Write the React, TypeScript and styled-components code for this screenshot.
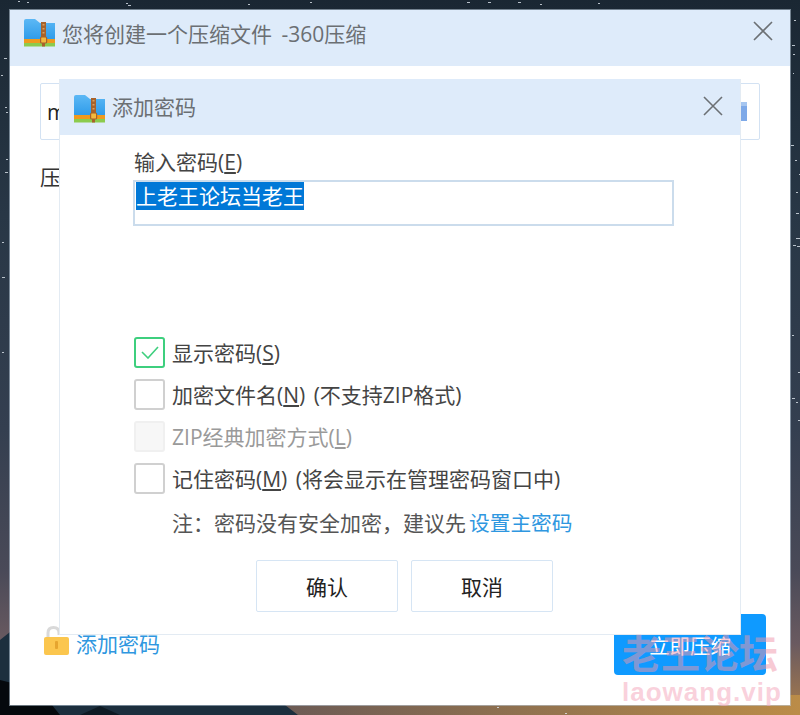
import React from "react";
import styled, { createGlobalStyle } from "styled-components";

const Global = createGlobalStyle`
  html, body { margin: 0; padding: 0; background: #1b2a38; }
  body { font-family: "Open Sans", "Noto Sans CJK SC", sans-serif; }
  * { box-sizing: border-box; }
`;

const Desktop = styled.div`
  position: relative;
  width: 800px;
  height: 715px;
  padding: 10px;
  overflow: hidden;
`;
const WallpaperSvg = styled.svg`
  position: absolute;
  inset: 0;
`;
const Win = styled.div`
  position: relative;
  width: 780px;
  height: 695px;
  background: #fff;
  display: flex;
  flex-direction: column;
  box-shadow: 0 0 0 1px rgba(190, 205, 220, 0.55);
`;
const TitleBar = styled.div<{ $inner?: boolean }>`
  flex: none;
  height: 56px;
  background: #deebfa;
  display: flex;
  align-items: center;
  padding: ${(p) => (p.$inner ? "3px 17px 0 14px" : "0 17px 11px 14px")};
  gap: 7px;
`;
const TitleText = styled.div<{ $inner?: boolean }>`
  flex: 1;
  font-size: 21px;
  line-height: 28px;
  word-spacing: 4px;
  color: #6b6f73;
  margin-top: ${(p) => (p.$inner ? "-4px" : "2px")};
`;
const CloseSvg = styled.svg<{ $inner?: boolean }>`
  flex: none;
  margin-top: ${(p) => (p.$inner ? "-6px" : "-3px")};
`;
const WinBody = styled.div`
  flex: 1;
  padding: 17px 30px 0;
`;
const PathField = styled.div`
  height: 57px;
  border: 1px solid #d3e2f3;
  border-radius: 2px;
  display: flex;
  align-items: center;
  justify-content: space-between;
  padding: 0 12px 0 6px;
  font-size: 21px;
  color: #222;
`;
const FieldIcon = styled.span`
  width: 20px;
  height: 19px;
  background: linear-gradient(#a6c6f0 0 4px, #7ea9e8 4px);
`;
const SectionLabel = styled.div`
  margin-top: 22px;
  font-size: 21px;
  line-height: 30px;
  color: #333;
`;
const Footer = styled.div`
  flex: none;
  display: flex;
  align-items: center;
  justify-content: space-between;
  padding: 0 24px 30px 34px;
`;
const LockLink = styled.div`
  display: flex;
  align-items: center;
  gap: 7px;
  margin-bottom: 4px;
  font-size: 21px;
  color: #2f97e0;
`;
const LockSvg = styled.svg`
  flex: none;
  margin-bottom: 4px;
`;
const CompressBtn = styled.div`
  width: 152px;
  height: 61px;
  background: #0f9aff;
  border-radius: 4px;
  color: #fff;
  display: flex;
  align-items: center;
  justify-content: center;
  font-size: 20.4px;
`;
const Dialog = styled.div`
  position: absolute;
  left: 49px;
  top: 69px;
  width: 682px;
  height: 556px;
  background: #fff;
  border: 1px solid #e3ebf3;
  border-top: 0;
  display: flex;
  flex-direction: column;
`;
const DialogBody = styled.div`
  flex: 1;
  padding: 12px 66px 0 73px;
  display: flex;
  flex-direction: column;
`;
const FieldLabel = styled.div`
  font-size: 21px;
  line-height: 30px;
  color: #444;
  padding-left: 1px;
`;
const PasswordBox = styled.div`
  margin-top: 3px;
  height: 46px;
  border: 2px solid #cbdcec;
  padding: 0 0 0 1px;
  font-size: 21px;
  line-height: 28px;
  color: #fff;
`;
const Selected = styled.span`
  display: inline-block;
  background: #0078d7;
  height: 28px;
`;
const Checks = styled.div`
  margin-top: 111px;
  padding-left: 1px;
  display: flex;
  flex-direction: column;
  gap: 11px;
`;
const CheckRow = styled.div<{ $off?: boolean }>`
  display: flex;
  align-items: center;
  gap: 7px;
  height: 31px;
  font-size: 21px;
  line-height: 30px;
  word-spacing: 3px;
  color: ${(p) => (p.$off ? "#9a9a9a" : "#444")};
`;
const Box = styled.div<{ $on?: boolean; $off?: boolean }>`
  flex: none;
  width: 31px;
  height: 31px;
  border-radius: 3px;
  border: 2px solid ${(p) => (p.$on ? "#3ecf7e" : p.$off ? "#f0f0f0" : "#d0d0d0")};
  background: ${(p) => (p.$off ? "#f7f7f7" : "#fff")};
  display: flex;
  align-items: center;
  justify-content: center;
`;
const Note = styled.div`
  margin-top: 14px;
  padding-left: 39px;
  font-size: 21px;
  line-height: 30px;
  color: #555;
  white-space: nowrap;
`;
const LinkText = styled.span`
  color: #2f97e0;
  margin-left: 3px;
  font-size: 20.7px;
`;
const Buttons = styled.div`
  margin-top: 22px;
  padding-left: 123px;
  display: flex;
  gap: 13px;
`;
const DlgBtn = styled.div`
  width: 142px;
  height: 52px;
  border: 1px solid #d6e5f4;
  border-radius: 2px;
  display: flex;
  align-items: center;
  justify-content: center;
  font-size: 21px;
  color: #222;
`;
const Watermark = styled.div`
  position: absolute;
  left: 622px;
  top: 630px;
  width: 170px;
  color: rgba(240, 150, 170, 0.5);
  font-weight: 700;
  pointer-events: none;
`;
const MarkCn = styled.div`
  font-size: 39px;
  line-height: 46px;
  white-space: nowrap;
`;
const MarkEn = styled.div`
  margin-top: 1px;
  font-family: "Liberation Sans", sans-serif;
  font-size: 26px;
  line-height: 30px;
  letter-spacing: 1px;
  color: rgba(245, 170, 190, 0.55);
  white-space: nowrap;
`;

const stars: [number, number, number][] = [
  [18, 1, 2], [27, 2, 2], [126, 3, 2], [128, 5, 3], [248, 4, 2], [310, 2, 2], [467, 2, 3], [488, 2, 3],
  [518, 2, 3], [540, 4, 2], [598, 3, 2], [15, 38, 3], [4, 58, 3], [1, 75, 2], [5, 107, 2], [6, 112, 2],
  [6, 159, 2], [5, 172, 3], [2, 242, 2], [2, 277, 3], [2, 352, 2], [794, 20, 2], [792, 45, 3], [793, 54, 2],
  [793, 73, 1], [791, 145, 3], [795, 160, 2], [799, 174, 2], [796, 192, 2], [796, 213, 3], [796, 238, 3],
  [799, 238, 2], [793, 245, 3], [797, 246, 4], [792, 335, 2], [798, 372, 2], [792, 398, 3], [796, 402, 2],
  [798, 420, 3], [497, 707, 2], [565, 713, 2],
];

function Wallpaper() {
  return (
    <WallpaperSvg width="800" height="715" viewBox="0 0 800 715">
      <defs>
        <linearGradient id="sky" x1="0" y1="0" x2="0" y2="1">
          <stop offset="0" stopColor="#1a2733" />
          <stop offset="0.3" stopColor="#283746" />
          <stop offset="0.6" stopColor="#343f50" />
          <stop offset="0.8" stopColor="#4a4a58" />
          <stop offset="0.9" stopColor="#6a5a60" />
          <stop offset="1" stopColor="#a87c4c" />
        </linearGradient>
        <linearGradient id="glow" x1="0" y1="0" x2="1" y2="0">
          <stop offset="0" stopColor="#6b5a55" />
          <stop offset="1" stopColor="#bb8c48" />
        </linearGradient>
      </defs>
      <rect width="800" height="715" fill="url(#sky)" />
      <rect x="280" y="695" width="520" height="20" fill="url(#glow)" />
      <path d="M0 640 L10 632 L30 620 L120 690 L285 705 L298 715 L0 715 Z" fill="#1c2f3e" />
      <path d="M0 680 L40 690 L60 715 L0 715 Z" fill="#05090d" />
      <path d="M100 706 L120 715 L80 715 Z" fill="#0e1a24" />
      {stars.map(([x, y, w], i) => (
        <rect key={i} x={x} y={y} width={w} height="1" fill="#dfe6ee" opacity="0.8" />
      ))}
    </WallpaperSvg>
  );
}

function ZipIcon() {
  return (
    <svg width="31" height="28" viewBox="0 0 31 28">
      <defs>
        <linearGradient id="fold" x1="0" y1="0" x2="0" y2="1">
          <stop offset="0" stopColor="#5cb8f5" />
          <stop offset="1" stopColor="#2f9cea" />
        </linearGradient>
      </defs>
      <path d="M0 2 Q0 0 2 0 H11 L16 4 H31 V20 H0 Z" fill="url(#fold)" />
      <rect y="20" width="31" height="4" fill="#ef9a1d" />
      <rect y="24" width="31" height="3.5" fill="#8ccb4d" />
      <rect x="17" y="3" width="5" height="17" fill="#a8622a" />
      <rect x="18.5" y="5" width="2" height="1.5" fill="#d7a062" />
      <rect x="18.5" y="9" width="2" height="1.5" fill="#d7a062" />
      <rect x="18.5" y="13" width="2" height="1.5" fill="#d7a062" />
      <rect x="16.6" y="18" width="6" height="6" rx="1" fill="#f3b93f" stroke="#a8622a" strokeWidth="1.2" />
      <rect x="18" y="24" width="3" height="3.5" fill="#a8622a" />
    </svg>
  );
}

function CloseIcon({ inner }: { inner?: boolean }) {
  return (
    <CloseSvg $inner={inner} width="20" height="20" viewBox="0 0 20 20">
      <path d="M1 1 L19 19 M19 1 L1 19" stroke="#6c7074" strokeWidth="1.6" fill="none" />
    </CloseSvg>
  );
}

function LockIcon() {
  return (
    <LockSvg width="25" height="29" viewBox="0 0 25 29">
      <path d="M4 12 V7 Q4 1.5 9.5 1.5 Q15 1.5 15 7 V9" fill="none" stroke="#d9d9d9" strokeWidth="3" />
      <rect y="11" width="25" height="18" rx="2" fill="#fbc64e" />
      <rect x="11" y="15" width="3" height="8" rx="1" fill="#e6a52f" />
    </LockSvg>
  );
}

export default function App() {
  return (
    <Desktop>
      <Global />
      <Wallpaper />
      <Win>
        <TitleBar>
          <ZipIcon />
          <TitleText>您将创建一个压缩文件 -360压缩</TitleText>
          <CloseIcon />
        </TitleBar>
        <WinBody>
          <PathField>
            m
            <FieldIcon />
          </PathField>
          <SectionLabel>压</SectionLabel>
        </WinBody>
        <Footer>
          <LockLink>
            <LockIcon />
            添加密码
          </LockLink>
          <CompressBtn>立即压缩</CompressBtn>
        </Footer>
        <Dialog>
          <TitleBar $inner>
            <ZipIcon />
            <TitleText $inner>添加密码</TitleText>
            <CloseIcon inner />
          </TitleBar>
          <DialogBody>
            <FieldLabel>
              输入密码(<u>E</u>)
            </FieldLabel>
            <PasswordBox>
              <Selected>上老王论坛当老王</Selected>
            </PasswordBox>
            <Checks>
              <CheckRow>
                <Box $on>
                  <svg width="18" height="13" viewBox="0 0 18 13">
                    <path d="M1 6 L7 12 L17 1" fill="none" stroke="#3ecf7e" strokeWidth="1.6" />
                  </svg>
                </Box>
                <span>
                  显示密码(<u>S</u>)
                </span>
              </CheckRow>
              <CheckRow>
                <Box />
                <span>
                  加密文件名(<u>N</u>) (不支持ZIP格式)
                </span>
              </CheckRow>
              <CheckRow $off>
                <Box $off />
                <span>
                  ZIP经典加密方式(<u>L</u>)
                </span>
              </CheckRow>
              <CheckRow>
                <Box />
                <span>
                  记住密码(<u>M</u>) (将会显示在管理密码窗口中)
                </span>
              </CheckRow>
            </Checks>
            <Note>
              注：密码没有安全加密，建议先<LinkText>设置主密码</LinkText>
            </Note>
            <Buttons>
              <DlgBtn>确认</DlgBtn>
              <DlgBtn>取消</DlgBtn>
            </Buttons>
          </DialogBody>
        </Dialog>
      </Win>
      <Watermark>
        <MarkCn>老王论坛</MarkCn>
        <MarkEn>laowang.vip</MarkEn>
      </Watermark>
    </Desktop>
  );
}
